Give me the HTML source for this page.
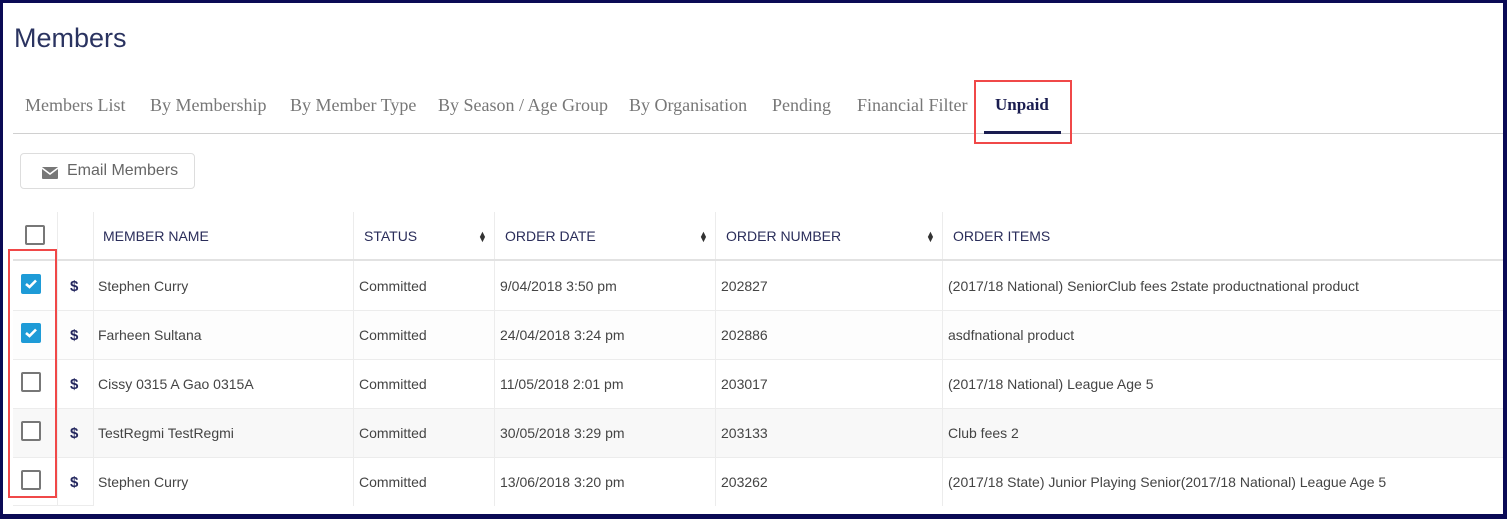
<!DOCTYPE html>
<html><head><style>
*{margin:0;padding:0;box-sizing:border-box}
body{width:1507px;height:519px;overflow:hidden;background:#fff;font-family:"Liberation Sans",sans-serif;position:relative}
.frame{position:absolute;left:0;top:0;width:1507px;height:519px;border:3px solid #0a0a55;border-right-width:4px;border-bottom-width:5px}
.a{position:absolute;white-space:nowrap}
.title{left:14px;top:23px;font-size:27px;color:#2a3360;font-weight:300}
.tab{top:95px;font-family:"Liberation Serif",serif;font-size:18px;color:#777}
.hl{position:absolute;left:13px;top:133px;width:1491px;height:1px;background:#d0d0d0}
.btn{left:20px;top:153px;width:175px;height:36px;border:1px solid #ddd;border-radius:4px;font-size:16px;color:#666;padding:8px 0 0 46px}
.hd{font-size:14px;color:#2a2d5a;top:228px}
.cell{font-size:14px;color:#444}
.cb{position:absolute;left:21px;width:20px;height:20px;border:2px solid #777;border-radius:2px;background:#fff}
.cb.on{background:#1e9bd7;border-color:#1e9bd7}
.vl{position:absolute;width:1px;background:#ececec}
.rl{position:absolute;left:13px;width:1491px;height:1px;background:#ececec}
.dol{font-size:15px;font-weight:bold;color:#23265e;left:70px}
.sort{font-size:9px;color:#333;line-height:5px}
.red{position:absolute;border:2px solid #f04848}
</style></head><body>
<div class="a title">Members</div>
<div class="a tab" style="left:25px">Members List</div>
<div class="a tab" style="left:150px">By Membership</div>
<div class="a tab" style="left:290px">By Member Type</div>
<div class="a tab" style="left:438px">By Season / Age Group</div>
<div class="a tab" style="left:629px">By Organisation</div>
<div class="a tab" style="left:772px">Pending</div>
<div class="a tab" style="left:857px">Financial Filter</div>
<div class="a tab" style="left:995px;color:#1a1d50;font-weight:bold;font-size:17px">Unpaid</div>
<div class="hl"></div>
<div style="position:absolute;left:984px;top:131px;width:77px;height:3px;background:#1a1d50"></div>
<div class="red" style="left:974px;top:80px;width:98px;height:64px"></div>
<div class="a btn"><svg style="position:absolute;left:21px;top:13px" width="16" height="12" viewBox="0 0 16 12"><rect x="0" y="0" width="16" height="12" rx="1" fill="#777"/><path d="M0 1 L8 7 L16 1" stroke="#fff" stroke-width="1.5" fill="none"/></svg>Email Members</div>
<div style="position:absolute;left:13px;top:408px;width:1491px;height:49px;background:#f8f8f8"></div>
<div style="position:absolute;left:13px;top:310px;width:1491px;height:49px;background:#fdfdfd"></div>
<div class="vl" style="left:57px;top:212px;height:294px"></div>
<div class="vl" style="left:93px;top:212px;height:294px"></div>
<div class="vl" style="left:353px;top:212px;height:294px"></div>
<div class="vl" style="left:494px;top:212px;height:294px"></div>
<div class="vl" style="left:715px;top:212px;height:294px"></div>
<div class="vl" style="left:942px;top:212px;height:294px"></div>
<div class="a" style="left:13px;top:259px;width:1491px;height:2px;background:#e2e2e2"></div>
<div class="rl" style="top:310px"></div><div class="rl" style="top:359px"></div><div class="rl" style="top:408px"></div><div class="rl" style="top:457px"></div><div class="rl" style="top:505px;left:13px;width:80px"></div>
<div class="cb" style="left:25px;top:225px"></div>
<div class="a hd" style="left:103px">MEMBER NAME</div>
<div class="a hd" style="left:364px">STATUS</div><div class="a sort" style="left:478px;top:232px">▲<br>▼</div>
<div class="a hd" style="left:505px">ORDER DATE</div><div class="a sort" style="left:699px;top:232px">▲<br>▼</div>
<div class="a hd" style="left:726px">ORDER NUMBER</div><div class="a sort" style="left:926px;top:232px">▲<br>▼</div>
<div class="a hd" style="left:953px">ORDER ITEMS</div>

<div class="cb on" style="top:274px"><svg width="16" height="16" viewBox="0 0 16 16" style="position:absolute;left:0;top:0"><path d="M3 8 L6.5 11 L13 4.5" stroke="#fff" stroke-width="2.6" fill="none"/></svg></div>
<div class="cb on" style="top:323px"><svg width="16" height="16" viewBox="0 0 16 16" style="position:absolute;left:0;top:0"><path d="M3 8 L6.5 11 L13 4.5" stroke="#fff" stroke-width="2.6" fill="none"/></svg></div>
<div class="cb" style="top:372px"></div>
<div class="cb" style="top:421px"></div>
<div class="cb" style="top:470px"></div>
<div class="red" style="left:8px;top:249px;width:49px;height:249px"></div>

<div class="a dol" style="top:278px">$</div><div class="a dol" style="top:327px">$</div><div class="a dol" style="top:376px">$</div><div class="a dol" style="top:425px">$</div><div class="a dol" style="top:474px">$</div>

<div class="a cell" style="left:98px;top:278px">Stephen Curry</div>
<div class="a cell" style="left:359px;top:278px">Committed</div>
<div class="a cell" style="left:500px;top:278px">9/04/2018 3:50 pm</div>
<div class="a cell" style="left:721px;top:278px">202827</div>
<div class="a cell" style="left:948px;top:278px">(2017/18 National) SeniorClub fees 2state productnational product</div>

<div class="a cell" style="left:98px;top:327px">Farheen Sultana</div>
<div class="a cell" style="left:359px;top:327px">Committed</div>
<div class="a cell" style="left:500px;top:327px">24/04/2018 3:24 pm</div>
<div class="a cell" style="left:721px;top:327px">202886</div>
<div class="a cell" style="left:948px;top:327px">asdfnational product</div>

<div class="a cell" style="left:98px;top:376px">Cissy 0315 A Gao 0315A</div>
<div class="a cell" style="left:359px;top:376px">Committed</div>
<div class="a cell" style="left:500px;top:376px">11/05/2018 2:01 pm</div>
<div class="a cell" style="left:721px;top:376px">203017</div>
<div class="a cell" style="left:948px;top:376px">(2017/18 National) League Age 5</div>

<div class="a cell" style="left:98px;top:425px">TestRegmi TestRegmi</div>
<div class="a cell" style="left:359px;top:425px">Committed</div>
<div class="a cell" style="left:500px;top:425px">30/05/2018 3:29 pm</div>
<div class="a cell" style="left:721px;top:425px">203133</div>
<div class="a cell" style="left:948px;top:425px">Club fees 2</div>

<div class="a cell" style="left:98px;top:474px">Stephen Curry</div>
<div class="a cell" style="left:359px;top:474px">Committed</div>
<div class="a cell" style="left:500px;top:474px">13/06/2018 3:20 pm</div>
<div class="a cell" style="left:721px;top:474px">203262</div>
<div class="a cell" style="left:948px;top:474px">(2017/18 State) Junior Playing Senior(2017/18 National) League Age 5</div>

<div class="frame"></div>
</body></html>
